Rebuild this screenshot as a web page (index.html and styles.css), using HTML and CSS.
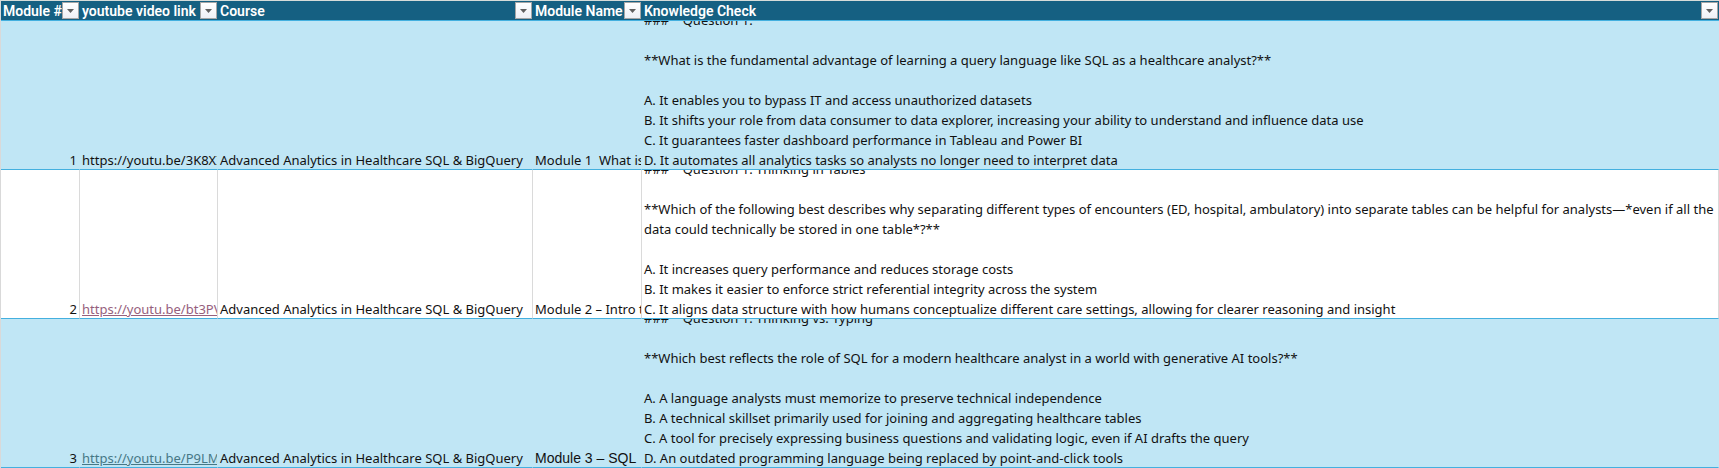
FILE: index.html
```html
<!DOCTYPE html>
<html lang="en">
<head>
<meta charset="utf-8">
<title>Course modules</title>
<link rel="stylesheet" href="styles.css">
</head>
<body>
<table class="sheet">
<colgroup><col class="col-number"><col class="col-link"><col class="col-course"><col class="col-name"><col></colgroup>
<thead>
<tr>
<th scope="col"><div class="head"><span>Module #</span><button class="filter" type="button" aria-label="Filter Module #"><svg viewBox="0 0 7 4"><path d="M0 0h7L3.500 4z"/></svg></button></div></th>
<th scope="col"><div class="head"><span>youtube video link</span><button class="filter" type="button" aria-label="Filter youtube video link"><svg viewBox="0 0 7 4"><path d="M0 0h7L3.500 4z"/></svg></button></div></th>
<th scope="col"><div class="head"><span>Course</span><button class="filter" type="button" aria-label="Filter Course"><svg viewBox="0 0 7 4"><path d="M0 0h7L3.500 4z"/></svg></button></div></th>
<th scope="col"><div class="head"><span>Module Name</span><button class="filter" type="button" aria-label="Filter Module Name"><svg viewBox="0 0 7 4"><path d="M0 0h7L3.500 4z"/></svg></button></div></th>
<th scope="col"><div class="head"><span>Knowledge Check</span><button class="filter" type="button" aria-label="Filter Knowledge Check"><svg viewBox="0 0 7 4"><path d="M0 0h7L3.500 4z"/></svg></button></div></th>
</tr>
</thead>
<tbody>
<tr class="band">
<td><div class="cell number">1</div></td>
<td><div class="cell">https://youtu.be/3K8XI</div></td>
<td><div class="cell">Advanced Analytics in Healthcare SQL &amp; BigQuery</div></td>
<td><div class="cell">Module 1  What is</div></td>
<td><div class="cell wrap">###    Question 1:

**What is the fundamental advantage of learning a query language like SQL as a healthcare analyst?**

A. It enables you to bypass IT and access unauthorized datasets
B. It shifts your role from data consumer to data explorer, increasing your ability to understand and influence data use
C. It guarantees faster dashboard performance in Tableau and Power BI
D. It automates all analytics tasks so analysts no longer need to interpret data</div></td>
</tr>
<tr>
<td><div class="cell number">2</div></td>
<td><div class="cell"><a class="visited" href="#bt3PV">https://youtu.be/bt3PV</a></div></td>
<td><div class="cell">Advanced Analytics in Healthcare SQL &amp; BigQuery</div></td>
<td><div class="cell">Module 2 – Intro to</div></td>
<td><div class="cell wrap">###    Question 1: Thinking in Tables

**Which of the following best describes why separating different types of encounters (ED, hospital, ambulatory) into separate tables can be helpful for analysts—*even if all the data could technically be stored in one table*?**

A. It increases query performance and reduces storage costs
B. It makes it easier to enforce strict referential integrity across the system
C. It aligns data structure with how humans conceptualize different care settings, allowing for clearer reasoning and insight</div></td>
</tr>
<tr class="band">
<td><div class="cell number">3</div></td>
<td><div class="cell"><a class="link" href="#P9LM">https://youtu.be/P9LM</a></div></td>
<td><div class="cell">Advanced Analytics in Healthcare SQL &amp; BigQuery</div></td>
<td><div class="cell alt-font">Module 3 – SQL</div></td>
<td><div class="cell wrap">###    Question 1: Thinking vs. Typing

**Which best reflects the role of SQL for a modern healthcare analyst in a world with generative AI tools?**

A. A language analysts must memorize to preserve technical independence
B. A technical skillset primarily used for joining and aggregating healthcare tables
C. A tool for precisely expressing business questions and validating logic, even if AI drafts the query
D. An outdated programming language being replaced by point-and-click tools</div></td>
</tr>
</tbody>
</table>
</body>
</html>
```
FILE: styles.css
```css
* { box-sizing: border-box; }
body {
  margin: 0;
  font: 13px/20px "Noto Sans", "Open Sans", sans-serif;
  color: #111;
}
.sheet {
  width: 100%;
  table-layout: fixed;
  border-collapse: separate;
  border-spacing: 0;
  border-top: 1px solid #d6dcd9;
  border-left: 1px solid #d9d9d9;
}
.col-number { width: 79px; }
.col-link { width: 138px; }
.col-course { width: 315px; }
.col-name { width: 109px; }
th, td { padding: 0; border-bottom: 1px solid #44b0df; }
th { background: #156082; color: #fff; }
td { border-right: 1px solid #dadada; background: #fff; }
.band td { background: #c0e6f5; border-right-color: #c0e6f5; }
.head {
  display: flex;
  align-items: center;
  justify-content: space-between;
  height: 19px;
  padding: 0 1px 0 2px;
  overflow: hidden;
  font-family: Roboto, sans-serif;
  font-size: 14px;
  font-weight: 600;
  white-space: nowrap;
}
.filter {
  flex: none;
  display: flex;
  align-items: center;
  justify-content: center;
  width: 17px;
  height: 17px;
  padding: 0;
  border: 1px solid #a6a6a6;
  background: linear-gradient(#fff, #eef0f6);
}
.filter svg { width: 7px; height: 4px; fill: #606060; }
.cell {
  display: flex;
  flex-direction: column;
  justify-content: flex-end;
  height: 149px;
  margin-bottom: -1px;
  padding-left: 2px;
  overflow: hidden;
  white-space: pre;
}
.wrap { white-space: pre-wrap; }
.number { align-items: flex-end; padding-right: 2px; }
.alt-font { font-family: "Liberation Sans", Arial, sans-serif; font-size: 14px; }
.visited { color: #96607d; }
.link { color: #467886; }
```
